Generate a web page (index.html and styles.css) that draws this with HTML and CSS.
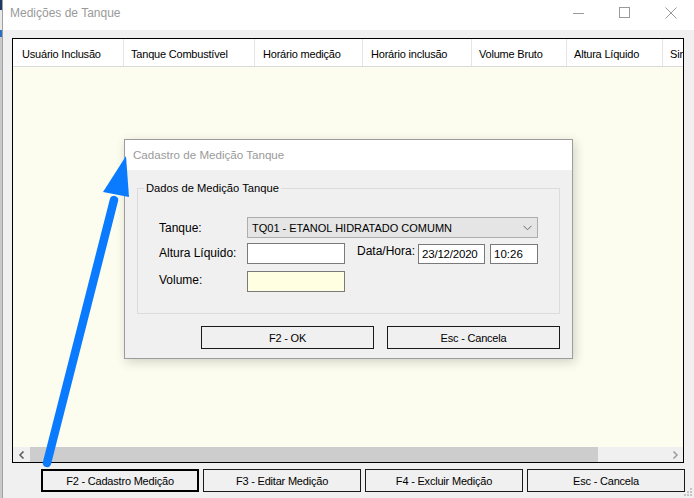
FILE: index.html
```html
<!doctype html>
<html>
<head>
	<meta charset="utf-8">
	<title>Medições de Tanque</title>
	<link rel="stylesheet" href="styles.css">
</head>
<body>
	<div class="window">
		<div class="edge"></div>
		<div class="frame">
			<div class="titlebar">
				<span class="title">Medições de Tanque</span>
				<span class="cap">
					<svg width="12" height="12" viewBox="0 0 12 12"><line x1="0" y1="6.5" x2="11" y2="6.5" stroke="#9a9a9a" stroke-width="1"/></svg>
				</span>
				<span class="cap">
					<svg width="12" height="12" viewBox="0 0 12 12"><rect x="0.5" y="0.5" width="10" height="10" fill="none" stroke="#9a9a9a" stroke-width="1"/></svg>
				</span>
				<span class="cap">
					<svg width="12" height="12" viewBox="0 0 12 12"><path d="M0.5 0.5 L11.5 11.5 M11.5 0.5 L0.5 11.5" stroke="#9a9a9a" stroke-width="1"/></svg>
				</span>
			</div>

			<div class="grid">
				<div class="grid-head">
					<div class="col c1">Usuário Inclusão</div>
					<div class="col c2">Tanque Combustível</div>
					<div class="col c3">Horário medição</div>
					<div class="col c4">Horário inclusão</div>
					<div class="col c5">Volume Bruto</div>
					<div class="col c6">Altura Líquido</div>
					<div class="col c7">Sin</div>
				</div>
				<div class="grid-body"></div>
				<div class="hscroll">
					<div class="sbtn">
						<svg width="8" height="8" viewBox="0 0 8 8"><polyline points="5.5,0.5 2,4 5.5,7.5" fill="none" stroke="#606060" stroke-width="1.6"/></svg>
					</div>
					<div class="track"><div class="thumb"></div></div>
					<div class="sbtn">
						<svg width="8" height="8" viewBox="0 0 8 8"><polyline points="2.5,0.5 6,4 2.5,7.5" fill="none" stroke="#a0a0a0" stroke-width="1.6"/></svg>
					</div>
				</div>
			</div>

			<div class="actions">
				<button class="btn focus">F2 - Cadastro Medição</button>
				<button class="btn">F3 - Editar Medição</button>
				<button class="btn">F4 - Excluir Medição</button>
				<button class="btn">Esc - Cancela</button>
			</div>
		</div>
	</div>

	<svg class="grip" width="10" height="10" viewBox="0 0 10 10">
		<rect x="7" y="1" width="2" height="2" fill="#c4c4c4"/>
		<rect x="4" y="4" width="2" height="2" fill="#c4c4c4"/>
		<rect x="7" y="4" width="2" height="2" fill="#c4c4c4"/>
		<rect x="1" y="7" width="2" height="2" fill="#c4c4c4"/>
		<rect x="4" y="7" width="2" height="2" fill="#c4c4c4"/>
		<rect x="7" y="7" width="2" height="2" fill="#c4c4c4"/>
	</svg>

	<!-- janela modal -->
	<div class="dialog">
		<div class="dlg-title">Cadastro de Medição Tanque</div>
		<div class="dlg-body">
			<div class="group">
				<span class="legend">Dados de Medição Tanque</span>
				<div class="rows">
					<div class="row">
						<span class="lbl">Tanque:</span>
						<div class="combo">
							<span>TQ01 - ETANOL HIDRATADO COMUMN</span>
							<svg width="9" height="6" viewBox="0 0 9 6"><polyline points="0.5,0.8 4.5,4.8 8.5,0.8" fill="none" stroke="#6a6a6a" stroke-width="1"/></svg>
						</div>
					</div>
					<div class="row">
						<span class="lbl">Altura Líquido:</span>
						<div class="field"></div>
						<span class="lbl2">Data/Hora:</span>
						<div class="field date">23/12/2020</div>
						<div class="field time">10:26</div>
					</div>
					<div class="row">
						<span class="lbl">Volume:</span>
						<div class="field vol"></div>
					</div>
				</div>
			</div>
			<div class="dlg-actions">
				<button class="btn dbtn">F2 - OK</button>
				<button class="btn dbtn">Esc - Cancela</button>
			</div>
		</div>
	</div>

	<svg class="arrow" width="694" height="498" viewBox="0 0 694 498">
		<line x1="47" y1="463" x2="114" y2="200" stroke="#0a7bff" stroke-width="8.5" stroke-linecap="round"/>
		<polygon points="103,192 129,197 126,156" fill="#0a7bff"/>
	</svg>
</body>
</html>
```

FILE: styles.css
```css
* {
	box-sizing: border-box;
}
body {
	margin: 0;
	width: 694px;
	height: 498px;
	overflow: hidden;
	position: relative;
	background: #f0f0f0;
	font-family: "Liberation Sans", Arial, sans-serif;
	font-size: 12px;
	color: #000;
}
.window {
	display: flex;
	height: 498px;
}
.edge {
	width: 3px;
	background: linear-gradient(#1d3a66 0, #1d3a66 10px, #e8e8e8 10px, #e8e8e8 30px, #2a6fc0 30px, #2a6fc0 37px, #c9c9c9 37px);
	border-right: 1px solid #a0a0a0;
}
.frame {
	flex: 1;
	display: flex;
	flex-direction: column;
}

/* barra de título */
.titlebar {
	display: flex;
	height: 30px;
	background: #fff;
	padding-left: 7px;
}
.title {
	flex: 1;
	padding-top: 5px;
	line-height: 16px;
	color: #9a9a9a;
}
.cap {
	width: 46px;
	height: 26px;
	display: flex;
	align-items: center;
	justify-content: center;
}

/* grade */
.grid {
	display: flex;
	flex-direction: column;
	width: 672px;
	height: 425px;
	margin: 8px 0 0 9px;
	border: 1px solid #000;
	background: #fdfdef;
}
.grid-head {
	display: flex;
	height: 28px;
	background: #fff;
	border-bottom: 1px solid #dadada;
	overflow: hidden;
	font-size: 11px;
	letter-spacing: -0.2px;
}
.col {
	flex: none;
	display: flex;
	align-items: center;
	padding: 2px 0 0 8px;
	border-right: 1px solid #e5e5e5;
	white-space: nowrap;
}
.c1 { width: 111px; padding-left: 9px; }
.c2 { width: 131px; padding-left: 7px; }
.c3 { width: 108px; }
.c4 { width: 109px; }
.c5 { width: 95px; padding-left: 7px; }
.c6 { width: 96px; padding-left: 7px; }
.c7 { width: 40px; padding-left: 7px; border-right: 0; }
.grid-body {
	flex: 1;
}
.hscroll {
	display: flex;
	height: 15px;
	background: #f0f0f0;
}
.sbtn {
	width: 17px;
	display: flex;
	align-items: center;
	justify-content: center;
}
.track {
	flex: 1;
}
.thumb {
	width: 568px;
	height: 15px;
	background: #cdcdcd;
}

/* botões */
.actions {
	display: flex;
	gap: 4px;
	margin: 6px 0 0 38px;
}
.btn {
	width: 158px;
	height: 23px;
	padding: 0;
	background: #f0f0f0;
	border: 1px solid #1a1a1a;
	font-family: "Liberation Sans", Arial, sans-serif;
	font-size: 11px;
	letter-spacing: -0.2px;
	color: #000;
}
.btn.focus {
	border: 2px solid #000;
}
.grip {
	position: absolute;
	right: 1px;
	bottom: 1px;
}

/* diálogo */
.dialog {
	position: absolute;
	left: 124px;
	top: 139px;
	width: 449px;
	height: 220px;
	border: 1px solid #9c9c9c;
	background: #f0f0f0;
	box-shadow: 2px 3px 10px rgba(0, 0, 0, 0.18);
}
.dlg-title {
	height: 30px;
	line-height: 30px;
	padding-left: 8px;
	background: #fff;
	color: #9a9a9a;
	font-size: 11.6px;
}
.dlg-body {
	padding: 18px 12px 0;
}
.group {
	height: 126px;
	border: 1px solid #dcdcdc;
}
.legend {
	display: table;
	margin: -8px 0 0 6px;
	padding: 0 2px;
	line-height: 14px;
	font-size: 11.2px;
	background: #f0f0f0;
}
.rows {
	display: flex;
	flex-direction: column;
	gap: 4px;
	padding: 22px 0 0 21px;
}
.row {
	display: flex;
	align-items: center;
}
.row:last-child {
	margin-top: 3px;
}
.row:last-child .lbl {
	margin-top: -3px;
}
.lbl {
	width: 88px;
}
.lbl2 {
	width: 61px;
	margin-left: 12px;
	align-self: flex-start;
	padding-top: 2px;
}
.combo {
	display: flex;
	align-items: center;
	justify-content: space-between;
	width: 291px;
	height: 21px;
	padding: 0 5px 0 4px;
	background: #e5e5e5;
	border: 1px solid #adadad;
	font-size: 11px;
}
.field {
	width: 98px;
	height: 21px;
	padding-left: 3px;
	line-height: 18px;
	background: #fff;
	border: 1px solid #7a7a7a;
}
.field.date {
	width: 67px;
	height: 20px;
	margin-top: 2px;
	align-self: flex-start;
	font-size: 11.5px;
	letter-spacing: -0.2px;
}
.field.time {
	width: 48px;
	height: 20px;
	margin: 2px 0 0 5px;
	align-self: flex-start;
	font-size: 11.5px;
}
.field.vol {
	background: #ffffe1;
}
.dlg-actions {
	display: flex;
	justify-content: flex-end;
	gap: 13px;
	margin-top: 12px;
}
.dbtn {
	width: 173px;
}

.arrow {
	position: absolute;
	left: 0;
	top: 0;
	pointer-events: none;
}
```
